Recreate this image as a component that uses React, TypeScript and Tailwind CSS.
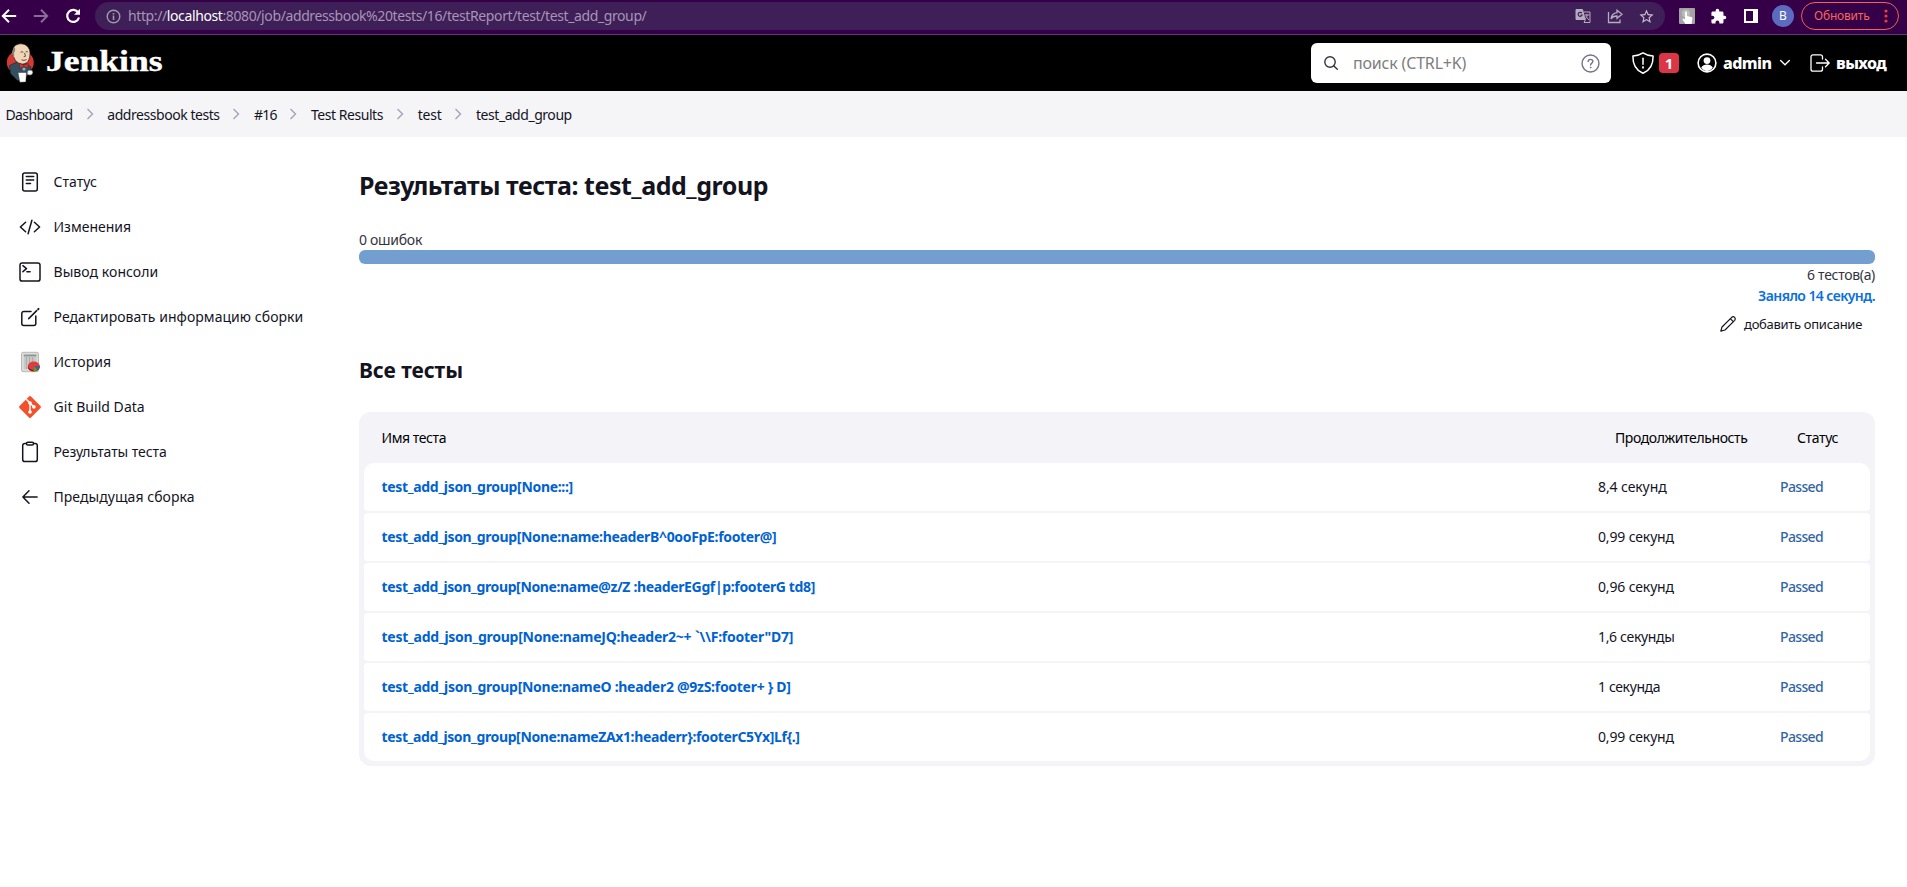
import type { ReactNode } from "react";
import { MdStarBorder, MdExtension } from "react-icons/md";

type Crumb = { label: string; cls: string };

const crumbs: Crumb[] = [
  { label: "Dashboard", cls: "w-[66.5px] tracking-[-0.6px]" },
  { label: "addressbook tests", cls: "w-[111.5px] tracking-[-0.45px]" },
  { label: "#16", cls: "w-[21.5px] tracking-[-0.8px]" },
  { label: "Test Results", cls: "w-[71.5px] tracking-[-0.45px]" },
  { label: "test", cls: "w-[23px] tracking-[-0.18px]" },
  { label: "test_add_group", cls: "w-[96px] tracking-[-0.45px]" },
];

const tests = [
  { name: "test_add_json_group[None:::]", cls: "tracking-[-0.31px]", time: "8,4 секунд", timeCls: "tracking-[-0.1px]" },
  { name: "test_add_json_group[None:name:headerB^0ooFpE:footer@]", cls: "tracking-[-0.33px]", time: "0,99 секунд", timeCls: "tracking-[-0.15px]" },
  { name: "test_add_json_group[None:name@z/Z :headerEGgf|p:footerG td8]", cls: "tracking-[-0.36px]", time: "0,96 секунд", timeCls: "tracking-[-0.15px]" },
  { name: "test_add_json_group[None:nameJQ:header2~+ `\\\\F:footer\"D7]", cls: "tracking-[-0.25px]", time: "1,6 секунды", timeCls: "tracking-[-0.33px]" },
  { name: "test_add_json_group[None:nameO :header2 @9zS:footer+ } D]", cls: "tracking-[-0.28px]", time: "1 секунда", timeCls: "tracking-[-0.38px]" },
  { name: "test_add_json_group[None:nameZAx1:headerr}:footerC5Yx]Lf{.]", cls: "tracking-[-0.36px]", time: "0,99 секунд", timeCls: "tracking-[-0.15px]" },
];

function Line({ children, className = "size-6" }: { children: ReactNode; className?: string }) {
  return (
    <svg viewBox="0 0 24 24" className={className} fill="none" stroke="currentColor" strokeWidth="1.5" strokeLinecap="round" strokeLinejoin="round">
      {children}
    </svg>
  );
}

const sidebar: { label: string; cls: string; icon: ReactNode }[] = [
  {
    label: "Статус",
    cls: "tracking-[0.05px]",
    icon: (
      <Line>
        <rect x="4.7" y="2.9" width="14.6" height="18.2" rx="2" />
        <path d="M8.3 6.6h7.4M8.3 9.9h7.4M8.3 13.4h4.2" />
      </Line>
    ),
  },
  {
    label: "Изменения",
    cls: "",
    icon: (
      <Line>
        <path d="M7.6 7.2 2.4 12l5.2 4.8M16.4 7.2l5.2 4.8-5.2 4.8M13.9 5.2l-3.8 13.6" />
      </Line>
    ),
  },
  {
    label: "Вывод консоли",
    cls: "tracking-[0.06px]",
    icon: (
      <Line>
        <rect x="2" y="2.9" width="20" height="18.2" rx="2.2" />
        <path d="m4.9 5.7 3.6 3-3.6 3M8.9 11.7h3.2" />
      </Line>
    ),
  },
  {
    label: "Редактировать информацию сборки",
    cls: "tracking-[0.05px]",
    icon: (
      <Line>
        <path d="M13 6.4H5.8a2 2 0 0 0-2 2V18.6a2 2 0 0 0 2 2h10a2 2 0 0 0 2-2V11" />
        <path d="m10.7 13.6 8-8" />
        <path d="m20.2 4.2.3-.3" strokeWidth="2" />
      </Line>
    ),
  },
  {
    label: "История",
    cls: "",
    icon: (
      <svg viewBox="0 0 24 24" className="size-6">
        <rect x="3.5" y="2.3" width="17" height="19.4" rx="1.5" fill="#dcdcda" stroke="#b9b9b6" />
        <rect x="5.8" y="4.2" width="12.6" height="15" fill="#c6c8c6" />
        <path d="M5.8 5.5h12.6" stroke="#8e918e" strokeWidth="1.5" />
        <path d="M8.5 4.5v14.500M11.5 7v12M14.5 7v6" stroke="#a5a8a5" strokeWidth=".8" />
        <ellipse cx="15.8" cy="17" rx="6" ry="4.5" fill="#8f1515" />
        <ellipse cx="15.8" cy="15.8" rx="5.8" ry="4.3" fill="#e13b3b" />
        <path d="M15.8 16.3 21.7 16a6 4.800 0 0 1-2 4z" fill="#3a62a8" />
        <path d="m15.8 16.3 3.900 3.700a6 4 0 0 1-4.200 1.200z" fill="#58a01c" />
      </svg>
    ),
  },
  {
    label: "Git Build Data",
    cls: "tracking-[0.04px]",
    icon: (
      <svg viewBox="0 0 24 24" className="size-6">
        <path d="M11 1.5a1.4 1.4 0 0 1 2 0L22.5 11a1.4 1.4 0 0 1 0 2L13 22.5a1.4 1.4 0 0 1-2 0L1.5 13a1.4 1.4 0 0 1 0-2z" fill="#f4502a" />
        <path d="m8.3 4.3 3.7 3.7v8.500M12 8l3.700 3.700" stroke="#fff" strokeWidth="1.5" fill="none" />
        <circle cx="12" cy="8" r="1.8" fill="#fff" />
        <circle cx="12" cy="17" r="1.8" fill="#fff" />
        <circle cx="15.9" cy="11.9" r="1.8" fill="#fff" />
      </svg>
    ),
  },
  {
    label: "Результаты теста",
    cls: "tracking-[-0.08px]",
    icon: (
      <Line>
        <rect x="4.7" y="3.4" width="14.6" height="18.2" rx="2.2" />
        <rect x="8.5" y="2.2" width="7" height="2.8" rx="1.3" fill="#fff" />
      </Line>
    ),
  },
  {
    label: "Предыдущая сборка",
    cls: "tracking-[0.05px]",
    icon: (
      <Line>
        <path d="M11 5.8 4.9 12l6.1 6.200M5.200 12h13.900" />
      </Line>
    ),
  },
];

function Mascot() {
  return (
    <svg viewBox="0 0 28 40" className="h-10 w-7 shrink-0">
      <ellipse cx="14.3" cy="19.5" rx="13.5" ry="12.5" fill="#d33833" />
      <path d="M3.500 22.500 11 19l8 1 6 4-1 7-4 2-.5 4-8 .5-7-7z" fill="#335061" stroke="#15222b" strokeWidth=".6" />
      <path d="M7 7c0-4 4-6.200 8-6.200 5 0 9 4 9 9 0 3-.3 6-2 8.500-1.400 2-4 3.200-7 2.700-3-.6-6-3-7-6.500C6.500 13 6.500 10 7 7z" fill="#f0d6b7" stroke="#231f20" strokeWidth=".7" />
      <path d="M7.200 6C5.600 8 5.600 11 7.500 14.500c1-1.500.8-3 .3-4.500C9 9 9.500 6 9 4z" fill="#8a8078" />
      <path d="M14.500 9.300q1.500-1.200 2.800 0M19.500 9q1.200-1 2.400 0M18.500 10l1 3.200-1.800.5M15.500 16.800q2.500 1.400 5-.3" stroke="#3c3028" strokeWidth=".8" fill="none" />
      <path d="m13.500 20 4 2.200 4.800-1.800-.5 4.500-3.800-1.500-4.300 2.200z" fill="#d33833" stroke="#6d1312" strokeWidth=".5" />
      <circle cx="18" cy="26" r="1.600" fill="#81b0c4" />
      <path d="M12 29.500h8.500l-.7 9.500-6 .3z" fill="#fff" stroke="#231f20" strokeWidth=".4" />
      <path d="M21.500 27.500q5-1.500 5.500 1.500 0 3-3 3.200l-3-.7z" fill="#f3f3f3" stroke="#231f20" strokeWidth=".5" />
    </svg>
  );
}

function BrowserBar() {
  return (
    <div className="flex h-[35px] items-start border-b border-[#5b3b70] bg-[#350047] pt-[2px] text-white">
      <div className="flex h-7 w-[95px] shrink-0 items-center pl-px">
        <svg viewBox="0 0 16 16" className="size-4" fill="none" stroke="currentColor" strokeWidth="2">
          <path d="M8 1.7 1.8 8 8 14.3M2 8h13.200" />
        </svg>
        <svg viewBox="0 0 16 16" className="ml-4 size-4 text-[#8d6a9c]" fill="none" stroke="currentColor" strokeWidth="2">
          <path d="M8 1.7 14.2 8 8 14.3M14 8H.8" />
        </svg>
        <svg viewBox="0 0 16 16" className="ml-4 size-4" fill="none" stroke="currentColor" strokeWidth="2.2">
          <path d="M13.3 4.7A6 6 0 1 0 14 9.500" />
          <path d="M15 .8v6H9z" fill="currentColor" stroke="none" />
        </svg>
      </div>
      <div className="flex h-7 w-[1570px] shrink-0 items-center rounded-full bg-[#3e1f57] pl-[11px] pr-[10px] text-[#b5a7bf]">
        <svg viewBox="0 0 16 16" className="size-[15px]" fill="none" stroke="#9f9aa6" strokeWidth="1.5">
          <circle cx="8" cy="8" r="6.7" />
          <path d="M8 7v4.700M8 4.200v1.600" strokeWidth="1.7" />
        </svg>
        <span className="ml-[7px] text-[14px] leading-5 tracking-[-0.39px] text-[#a894b6]">
          http://<span className="text-white">localhost</span>:8080/job/addressbook%20tests/16/testReport/test/test_add_group/
        </span>
        <svg viewBox="0 0 16 16" className="ml-auto size-4 text-[#b7abc0]" fill="none" stroke="currentColor">
          <path d="M1 1.500h6.500l2.500 10H1z" fill="currentColor" />
          <path d="M8.500 4H15v10.500H9l1.500-3M9.500 7h5M12 6v1c0 2-1 3-2 4M11 8.500l3 3.500" />
          <path d="M6.800 5.200A2 2 0 1 0 7 7H5.500" stroke="#3e1f57" strokeWidth="1.2" />
        </svg>
        <svg viewBox="0 0 18 16" className="ml-[15px] h-4 w-[18px] text-[#b7abc0]" fill="none" stroke="currentColor" strokeWidth="1.3">
          <path d="M2.500 4v10.500h11.500v-3" />
          <path d="M11 2.200 16 6.300l-5 4V8c-2.800-.1-4.700.8-6 2.800.4-3.200 2.600-5.700 6-6.200z" />
        </svg>
        <MdStarBorder className="ml-[14px] size-[17px] text-[#c6bccd]" />
      </div>
      <div className="flex h-7 items-center pl-[14px]">
        <svg viewBox="0 0 16 16" className="size-4">
          <rect width="16" height="16" rx="1" fill="#a3a3a3" />
          <circle cx="7" cy="5.5" r="4" fill="#bcbcbc" />
          <path d="M6 4.500c0-1.200 2-1.200 2 0V8l4.500 1c.8.200 1 .8.900 1.500L12.600 16H6.500L3.500 11.500c-.2-1 .8-1.400 1.500-.7l1 1z" fill="#fff" />
        </svg>
        <MdExtension className="ml-[15px] size-[17px]" />
        <svg viewBox="0 0 14 14" className="ml-[17px] size-[14px]">
          <path fill="#fff" fillRule="evenodd" d="M0 0h14v14H0zM2 2v10h7V2z" />
        </svg>
        <div className="ml-[14px] flex size-[22px] items-center justify-center rounded-full bg-[#5c6bc0] text-[12px]">B</div>
        <div className="ml-[7px] flex h-7 w-[98px] items-center rounded-full border border-[#f0625a] pl-3 text-[#f3675d]">
          <span className="w-[65px] text-[12px] tracking-[-0.2px]">Обновить</span>
          <svg viewBox="0 0 4 14" className="ml-[5px] h-[14px] w-1" fill="#ee3f2f">
            <circle cx="2" cy="2" r="1.6" />
            <circle cx="2" cy="7" r="1.6" />
            <circle cx="2" cy="12" r="1.6" />
          </svg>
        </div>
      </div>
    </div>
  );
}

function Header() {
  return (
    <header className="flex h-14 items-center bg-black text-white">
      <div className="flex items-center pl-[6px]">
        <Mascot />
        <span className="mb-1 ml-3 origin-left scale-x-[1.225] font-['Liberation_Serif',serif] text-[29px] leading-9 font-bold [-webkit-text-stroke:0.4px_white]">Jenkins</span>
      </div>
      <div className="ml-auto flex h-10 w-[300px] items-center rounded-md bg-white pr-[11px] pl-[12px]">
        <svg viewBox="0 0 16 16" className="size-4 text-[#333340]" fill="none" stroke="currentColor" strokeWidth="1.4" strokeLinecap="round">
          <circle cx="7" cy="7" r="5.2" />
          <path d="m10.900 10.900 3.400 3.400" />
        </svg>
        <span className="ml-[14px] text-[16px] tracking-[-0.18px] text-[#7d7d7d]">поиск (CTRL+K)</span>
        <svg viewBox="0 0 20 20" className="ml-auto size-[19px] text-[#73738c]" fill="none" stroke="currentColor" strokeWidth="1.5" strokeLinecap="round">
          <circle cx="10" cy="10" r="8.9" />
          <path d="M7.500 8c.1-3.200 5-3 5-.3 0 2-2.400 1.900-2.400 4" />
          <circle cx="10.1" cy="14.3" r=".5" fill="currentColor" strokeWidth=".8" />
        </svg>
      </div>
      <div className="flex w-[296px] items-center pl-[20px]">
        <svg viewBox="0 0 24 24" className="size-6" fill="none" stroke="currentColor" strokeWidth="1.5" strokeLinecap="round" strokeLinejoin="round">
          <path d="M12 1.900C9 4 5.800 4.700 1.900 4.900 1.700 13 4.500 19 12 22.300 19.500 19 22.300 13 22.100 4.900 18.200 4.700 15 4 12 1.900z" />
          <path d="M12 7.300v6" />
          <circle cx="12" cy="16.5" r=".4" fill="currentColor" />
        </svg>
        <span className="ml-1 flex size-5 items-center justify-center rounded-[4px] bg-[#dc3545] text-[15px] font-bold">1</span>
        <svg viewBox="0 0 20 20" className="ml-[18px] size-5">
          <circle cx="10" cy="10" r="8.9" fill="none" stroke="#fff" strokeWidth="1.6" />
          <circle cx="10" cy="7.6" r="3.4" fill="#fff" />
          <path d="M4.200 14.800c1.200-2.600 3.300-3.300 5.800-3.300s4.600.7 5.800 3.300C14.500 16.800 12.500 18 10 18s-4.500-1.200-5.800-3.200z" fill="#fff" />
        </svg>
        <span className="ml-[6px] w-[50px] text-[16px] font-extrabold tracking-[-0.55px]">admin</span>
        <svg viewBox="0 0 12 8" className="ml-[6px] h-2 w-3" fill="none" stroke="currentColor" strokeWidth="1.3" strokeLinecap="round">
          <path d="m1.600 1.500 4.400 4.300 4.400-4.300" />
        </svg>
        <svg viewBox="0 0 20 20" className="ml-[19px] size-5" fill="none" stroke="currentColor" strokeWidth="1.3" strokeLinecap="round" strokeLinejoin="round">
          <path d="M12.500 6V3.800a2 2 0 0 0-2-2H3a2 2 0 0 0-2 2v12.400a2 2 0 0 0 2 2h7.500a2 2 0 0 0 2-2V14" />
          <path d="M6.500 10h12.500M15.500 6.300 19.200 10l-3.700 3.700" />
        </svg>
        <span className="ml-[6px] text-[16px] font-extrabold tracking-[-0.55px]">выход</span>
      </div>
    </header>
  );
}

export default function App() {
  return (
    <div className="flex h-[887px] w-[1907px] flex-col overflow-hidden bg-white font-['Noto_Sans','Open_Sans',sans-serif] text-[14px] leading-5 whitespace-pre text-[#14141f]">
      <BrowserBar />
      <Header />
      <nav className="flex h-[46px] items-center bg-[#f5f5f8] pt-[2px] pl-[5.5px]">
        {crumbs.map((c, i) => (
          <div key={c.label} className="flex items-center">
            <span className={c.cls}>{c.label}</span>
            {i < crumbs.length - 1 && (
              <span className="flex w-[35.300px] justify-center pb-[3px]">
                <svg viewBox="0 0 8 12" className="h-3 w-2" fill="none" stroke="#a3a3b8" strokeWidth="1.4">
                  <path d="m1.500 1 5 5-5 5" />
                </svg>
              </span>
            )}
          </div>
        ))}
      </nav>
      <div className="flex">
        <aside className="flex w-[359px] flex-col pt-[22px] pl-[18px]">
          {sidebar.map((s) => (
            <div key={s.label} className="flex h-[45px] items-center gap-[11.5px]">
              {s.icon}
              <span className={s.cls}>{s.label}</span>
            </div>
          ))}
        </aside>
        <main className="flex w-[1516px] flex-col">
          <h1 className="mt-[31px] text-[25px] leading-[34px] font-bold tracking-[-0.46px]">Результаты теста: test_add_group</h1>
          <div className="mt-[28px] tracking-[-0.28px] text-[#333340]">0 ошибок</div>
          <div className="h-[14px] rounded-[6px] bg-[#729fcf]" />
          <div className="mt-px text-right tracking-[-0.32px] text-[#333340]">6 тестов(а)</div>
          <div className="mt-px text-right font-semibold tracking-[-0.58px] text-[#0b6fe0]">Заняло 14 секунд.</div>
          <div className="mt-[8px] flex items-center justify-end pr-[13px]">
            <svg viewBox="0 0 18 18" className="size-[18px]" fill="none" stroke="currentColor" strokeWidth="1.2" strokeLinejoin="round">
              <path d="M1.800 16.200 3 12 12.700 2.300c2-1.800 4.800.9 3 3L6 15z" />
              <path d="m11.300 3.700 3 3" />
            </svg>
            <span className="ml-[7px] text-[13px] tracking-[-0.3px]">добавить описание</span>
          </div>
          <h2 className="mt-[22px] text-[21px] leading-7 font-bold tracking-[-0.07px]">Все тесты</h2>
          <div className="mt-[28px] flex flex-col rounded-xl bg-[#f3f3f8] px-[5px] pb-[5px]">
            <div className="grid h-[51px] grid-cols-[1233.5px_182px_1fr] items-center pl-[17.5px] text-black">
              <span className="tracking-[-0.42px]">Имя теста</span>
              <span className="tracking-[-0.4px]">Продолжительность</span>
              <span className="tracking-[-0.35px]">Статус</span>
            </div>
            <div className="flex flex-col gap-[2px]">
              {tests.map((t) => (
                <div key={t.name} className="grid h-12 grid-cols-[1216.5px_182px_1fr] items-center rounded-[4px] bg-white pl-[17.5px] first:rounded-t-[10px] last:rounded-b-[10px]">
                  <span className={`font-bold text-[#0062d1] ${t.cls}`}>{t.name}</span>
                  <span className={t.timeCls}>{t.time}</span>
                  <span className="tracking-[-0.65px] font-medium text-[#3465a4]">Passed</span>
                </div>
              ))}
            </div>
          </div>
        </main>
      </div>
    </div>
  );
}
